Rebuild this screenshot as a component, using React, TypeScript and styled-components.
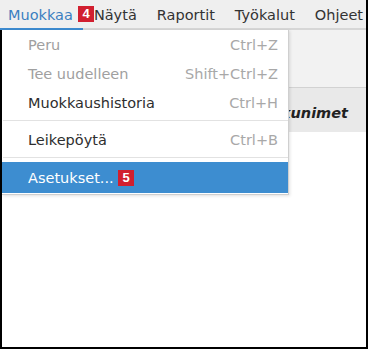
import React from 'react';
import styled, { createGlobalStyle } from 'styled-components';

const GlobalStyle = createGlobalStyle`
  html, body {
    margin: 0;
    padding: 0;
    background: #fff;
  }
  body {
    font-family: "DejaVu Sans", "Liberation Sans", sans-serif;
  }
`;

const Frame = styled.div`
  position: relative;
  width: 368px;
  height: 349px;
  box-sizing: border-box;
  border-right: 2px solid #000;
  border-bottom: 2px solid #000;
  overflow: hidden;
  display: flex;
  flex-direction: column;
  background: #fff;
`;

const MenuBar = styled.div`
  display: flex;
  height: 28px;
  flex-shrink: 0;
  background: #efefef;
  border-bottom: 2px solid #d6d6d6;
  position: relative;
`;

const MenuItem = styled.div<{ $active?: boolean; $pl?: number }>`
  padding: 2px 10px 0 ${(p) => p.$pl ?? 10}px;
  display: flex;
  align-items: center;
  font-size: 14.5px;
  color: ${(p) => (p.$active ? '#3b7fc1' : '#333')};
  border-bottom: 2px solid ${(p) => (p.$active ? '#3d8bd0' : 'transparent')};
  margin-bottom: -2px;
  white-space: nowrap;
`;

const Badge = styled.span<{ $left: number; $top: number }>`
  position: absolute;
  left: ${(p) => p.$left}px;
  top: ${(p) => p.$top}px;
  width: 16px;
  height: 16px;
  background: #d11f2f;
  color: #fff;
  font-family: "Liberation Sans", Arial, sans-serif;
  font-weight: bold;
  font-size: 13px;
  line-height: 16px;
  text-align: center;
`;

const Body = styled.div`
  flex: 1;
  border-left: 2px solid #000;
  display: flex;
  flex-direction: column;
  position: relative;
`;

const Toolbar = styled.div`
  height: 57px;
  background: #f2f2f2;
  border-bottom: 1px solid #d2d2d2;
`;

const HeaderRow = styled.div`
  height: 44px;
  background: #e9e9e9;
  display: flex;
  align-items: center;
  justify-content: flex-end;
  padding-right: 18px;
  padding-top: 6px;
  box-sizing: border-box;
`;

const HeaderCell = styled.div`
  font-weight: bold;
  font-style: italic;
  font-size: 14.5px;
  color: #222;
`;

const Dropdown = styled.div`
  position: absolute;
  left: 0;
  top: 0;
  width: 286px;
  background: #fff;
  border: 1px solid #cfcfcf;
  border-top: none;
  border-left: none;
  box-shadow: 1px 1px 3px rgba(0, 0, 0, 0.12);
  padding-bottom: 1px;
`;

const Row = styled.div<{ $disabled?: boolean; $selected?: boolean }>`
  height: ${(p) => (p.$selected ? 31 : 29)}px;
  display: flex;
  align-items: center;
  justify-content: space-between;
  padding: 0 10px 0 26px;
  font-size: 14.5px;
  color: ${(p) => (p.$selected ? '#fff' : p.$disabled ? '#a0a0a0' : '#2e2e2e')};
  background: ${(p) => (p.$selected ? '#3d8dd0' : 'transparent')};
  position: relative;
`;

const Shortcut = styled.span`
  color: #a8a8a8;
  font-size: 14.5px;
`;

const Separator = styled.div`
  height: 1px;
  background: #e2e2e2;
  margin: 3px 0 4px 1px;
`;

export default function App() {
  return (
    <>
      <GlobalStyle />
      <Frame>
        <MenuBar>
          <MenuItem $active $pl={8}>Muokkaa</MenuItem>
          <MenuItem $pl={11}>Näytä</MenuItem>
          <MenuItem>Raportit</MenuItem>
          <MenuItem>Työkalut</MenuItem>
          <MenuItem>Ohjeet</MenuItem>
          <Badge $left={78} $top={6}>4</Badge>
        </MenuBar>
        <Body>
          <Toolbar />
          <HeaderRow>
            <HeaderCell>Sukunimet</HeaderCell>
          </HeaderRow>
          <Dropdown>
            <Row $disabled>
              <span>Peru</span>
              <Shortcut>Ctrl+Z</Shortcut>
            </Row>
            <Row $disabled>
              <span>Tee uudelleen</span>
              <Shortcut>Shift+Ctrl+Z</Shortcut>
            </Row>
            <Row>
              <span>Muokkaushistoria</span>
              <Shortcut>Ctrl+H</Shortcut>
            </Row>
            <Separator />
            <Row>
              <span>Leikepöytä</span>
              <Shortcut>Ctrl+B</Shortcut>
            </Row>
            <Separator />
            <Row $selected>
              <span>Asetukset...</span>
              <Badge $left={116} $top={8}>5</Badge>
            </Row>
          </Dropdown>
        </Body>
      </Frame>
    </>
  );
}
